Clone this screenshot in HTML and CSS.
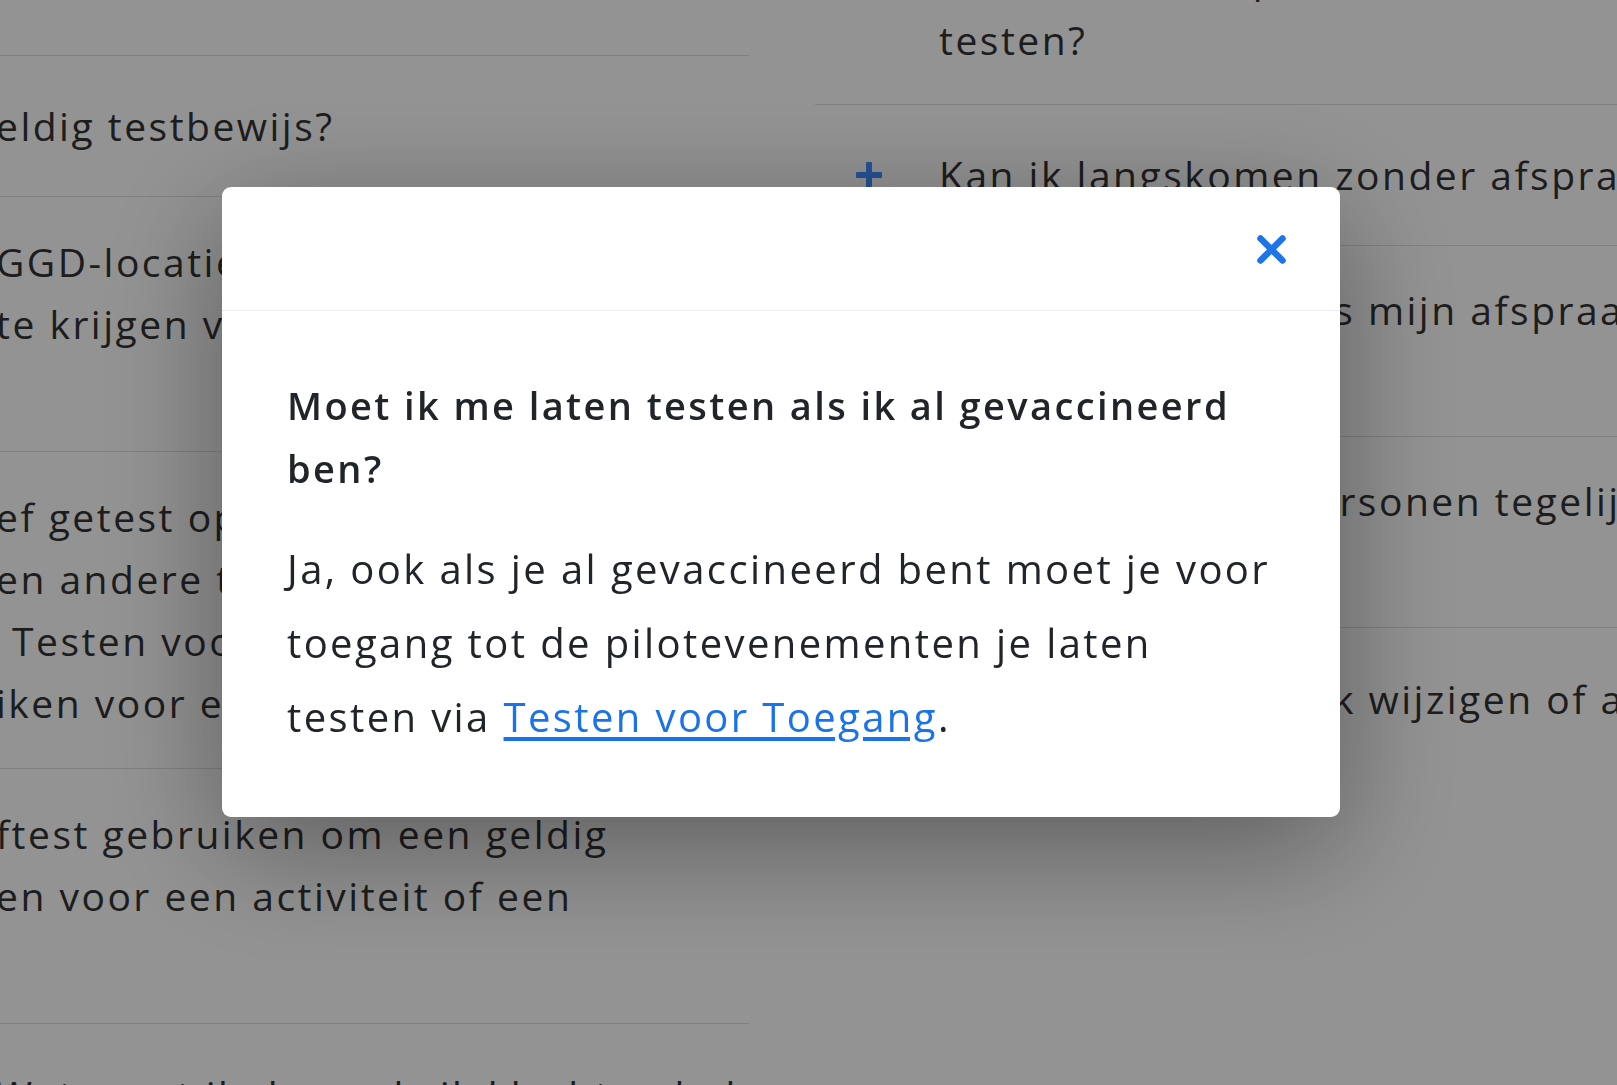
FILE: index.html
```html
<!DOCTYPE html>
<html lang="nl">
<head>
    <meta charset="UTF-8">
    <meta name="viewport" content="width=device-width, initial-scale=1.0">
    <title>Veelgestelde vragen</title>
    <link rel="stylesheet" href="styles.css">
</head>
<body>
    <main class="faq">
        <ul class="faq-list faq-list--left">
            <li class="faq-item">
                <div class="faq-text">
                    <span class="line">eldig testbewijs?</span>
                </div>
            </li>
            <li class="faq-item">
                <div class="faq-text">
                    <span class="line">GGD-locatie laten testen om een testbewijs</span>
                    <span class="line">te krijgen voor een activiteit?</span>
                    <span class="line"></span>
                </div>
            </li>
            <li class="faq-item">
                <div class="faq-text">
                    <span class="line">ef getest op een GGD-locatie of bij</span>
                    <span class="line">en andere testaanbieder. Kan ik dan</span>
                    <span class="line line--indent">Testen voor Toegang</span>
                    <span class="line">iken voor een activiteit?</span>
                </div>
            </li>
            <li class="faq-item">
                <div class="faq-text">
                    <span class="line">ftest gebruiken om een geldig</span>
                    <span class="line">en voor een activiteit of een</span>
                    <span class="line"></span>
                </div>
            </li>
            <li class="faq-item">
                <div class="faq-text">
                    <span class="line">Wat moet ik doen als ik klachten heb na de test?</span>
                </div>
            </li>
        </ul>

        <ul class="faq-list faq-list--right">
            <li class="faq-item">
                <span class="faq-plus"></span>
                <div class="faq-text">
                    <span class="line">Moet ik een afspraak maken om me te laten</span>
                    <span class="line">testen?</span>
                </div>
            </li>
            <li class="faq-item">
                <span class="faq-plus"></span>
                <div class="faq-text">
                    <span class="line">Kan ik langskomen zonder afspraak?</span>
                </div>
            </li>
            <li class="faq-item">
                <span class="faq-plus"></span>
                <div class="faq-text">
                    <span class="line">Wat gebeurt hier als mijn afspraak niet</span>
                    <span class="line">doorgaat?</span>
                </div>
            </li>
            <li class="faq-item">
                <span class="faq-plus"></span>
                <div class="faq-text">
                    <span class="line">Kan ik meerdere personen tegelijk</span>
                    <span class="line">aanmelden?</span>
                </div>
            </li>
            <li class="faq-item">
                <span class="faq-plus"></span>
                <div class="faq-text">
                    <span class="line">Kan ik mijn afspraak wijzigen of annuleren?</span>
                </div>
            </li>
        </ul>
    </main>

    <div class="backdrop"></div>

    <div class="modal-layer">
        <div class="modal" role="dialog" aria-modal="true">
            <div class="modal-header">
                <button class="modal-close" aria-label="Sluiten">
                    <svg width="31" height="31" viewBox="0 0 31 31">
                        <path d="M4.5 4.5 L26.5 26.5 M26.5 4.5 L4.5 26.5" stroke="currentColor" stroke-width="6.5" stroke-linecap="round" fill="none"/>
                    </svg>
                </button>
            </div>
            <div class="modal-body">
                <h5 class="modal-title">Moet ik me laten testen als ik al gevaccineerd ben?</h5>
                <p class="modal-text">Ja, ook als je al gevaccineerd bent moet je voor toegang tot de pilotevenementen je laten testen via <a href="#">Testen voor Toegang</a>.</p>
            </div>
        </div>
    </div>
</body>
</html>
```

FILE: styles.css
```css
body {
    margin: 0;
    height: 100vh;
    overflow: hidden;
    background: #fcfcfe;
    font-family: "Open Sans", "Noto Sans", sans-serif;
    color: #333;
}

.faq {
    display: grid;
    grid-template-columns: 749px 1fr;
    column-gap: 66px;
}

.faq-list {
    list-style: none;
    margin: 0;
    padding: 0;
    overflow: hidden;
}

.faq-list--left {
    margin-top: 55px;
    border-top: 1px solid #dcdcdc;
}

.faq-list--right {
    margin-top: -86px;
}

.faq-item {
    box-sizing: border-box;
    min-height: 141px;
    padding: 34px 0;
    border-bottom: 1px solid #dcdcdc;
    display: flex;
    align-items: center;
    gap: 57px;
    font-size: 39px;
    line-height: 62px;
    letter-spacing: 2.5px;
    white-space: nowrap;
}

.faq-list--right .faq-item {
    padding: 33px 0 33px 41px;
}

.faq-item:last-child {
    border-bottom: none;
}

.faq-list--left .faq-text {
    margin-left: -4px;
}

.line {
    display: block;
}

.line:empty {
    height: 62px;
}

.line--indent {
    padding-left: 16px;
}

.faq-plus {
    position: relative;
    flex: none;
    align-self: flex-start;
    margin-top: 24px;
    width: 26px;
    height: 26px;
}

.faq-plus::before,
.faq-plus::after {
    content: "";
    position: absolute;
    background: #3f8cff;
    border-radius: 1px;
}

.faq-plus::before {
    left: 0;
    right: 0;
    top: 10px;
    height: 6px;
}

.faq-plus::after {
    top: 0;
    bottom: 0;
    left: 10px;
    width: 6px;
}

.backdrop {
    position: fixed;
    inset: 0;
    background: rgba(0, 0, 0, 0.415);
}

.modal-layer {
    position: fixed;
    inset: 0;
}

.modal {
    margin: 187px 0 0 222px;
    width: 1118px;
    background: #fff;
    border-radius: 9px;
    box-shadow: 0 30px 120px rgba(0, 0, 0, 0.38);
    color: #212529;
}

.modal-header {
    box-sizing: border-box;
    height: 124px;
    padding: 2px 53px 0;
    border-bottom: 1px solid #e9ecef;
    display: flex;
    justify-content: flex-end;
    align-items: center;
}

.modal-close {
    padding: 0;
    border: none;
    background: none;
    color: #1f74e8;
    width: 31px;
    height: 31px;
    cursor: pointer;
}

.modal-close svg {
    display: block;
}

.modal-body {
    padding: 63px 65px;
}

.modal-title {
    margin: 0 0 32px;
    font-size: 38px;
    font-weight: 600;
    line-height: 63px;
    letter-spacing: 2.4px;
}

.modal-text {
    margin: 0;
    font-size: 40px;
    line-height: 74px;
    letter-spacing: 2.4px;
}

.modal-text a {
    color: #1a73e8;
    text-underline-offset: 5px;
}
```
